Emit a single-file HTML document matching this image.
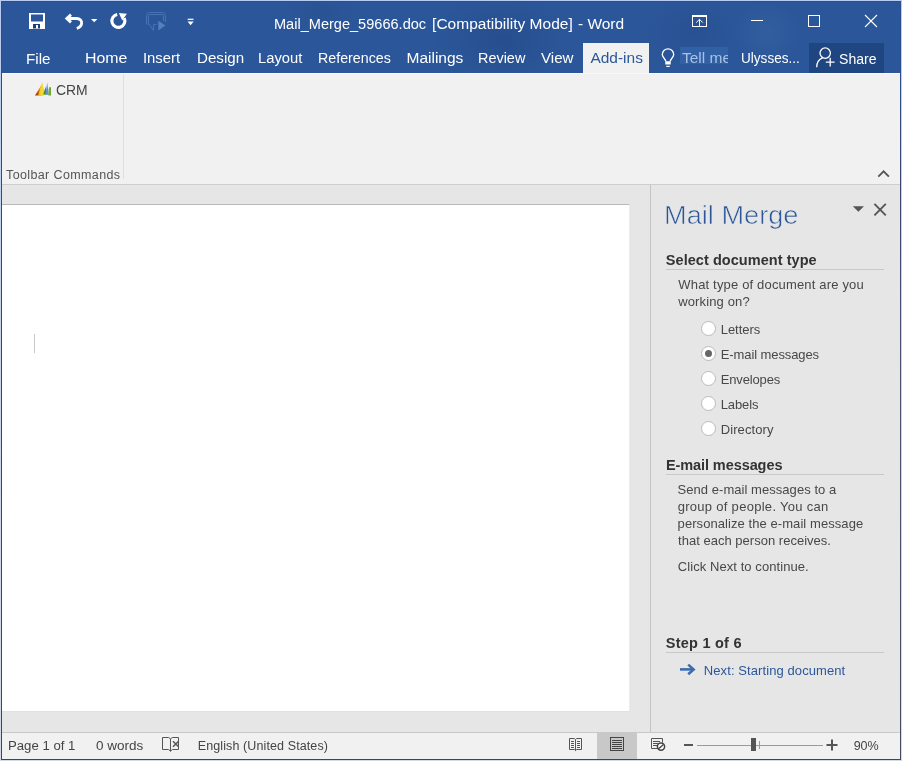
<!DOCTYPE html>
<html lang="en">
<head>
<meta charset="utf-8">
<title>Mail_Merge_59666.doc [Compatibility Mode] - Word</title>
<style>
*{box-sizing:border-box;margin:0;padding:0}
html,body{width:902px;height:761px;overflow:hidden;background:#c3d2ee}
body{font-family:"Liberation Sans",sans-serif;position:relative;color:#444;will-change:transform}
.abs{position:absolute}
svg{position:absolute;left:0;top:0;overflow:visible}
.t{position:absolute;white-space:nowrap}
#frame{left:0;top:0;width:902px;height:761px;background:linear-gradient(#b9cbf0 0,#c2d1ee 200px,#d4d9e6 100%)}
#inner{left:1px;top:1px;width:900px;height:759px;background:linear-gradient(#2a4f8c 0,#2b4d88 70px,#2d4877 400px,#39465f 100%)}
#titlebar{left:2px;top:2px;width:898px;height:71px;overflow:hidden;background:radial-gradient(ellipse 75px 50px at 500px 38px,rgba(0,10,50,.11),transparent),radial-gradient(ellipse 55px 40px at 690px 30px,rgba(0,10,50,.08),transparent),radial-gradient(ellipse 35px 32px at 765px 30px,rgba(255,255,255,.035),transparent),radial-gradient(ellipse 40px 25px at 320px 10px,rgba(0,10,50,.06),transparent),#2b579a}
#ribbon{left:2px;top:73px;width:898px;height:111px;background:#f1f1f1}
#ribline{left:2px;top:184px;width:898px;height:1px;background:#cecece}
#work{left:2px;top:185px;width:898px;height:547px;background:#e6e6e6}
#page{left:2px;top:204px;width:628px;height:508px;background:#fff;border-top:1px solid #b9b9b9;border-bottom:1px solid #e0e0e0;border-right:1px solid #ececec}
#vsep{left:650px;top:185px;width:1px;height:547px;background:#c4c4c4}
#status{left:2px;top:732px;width:898px;height:27px;background:#f1f1f1;border-top:1px solid #c8c8c8}
.tab{font-size:15.5px;line-height:17px;top:49px;color:#fff}
.st{font-size:12.5px;line-height:14px;top:739px;color:#444}
.pt{font-size:13px;line-height:15px;color:#484848}
.ph{font-size:14.5px;line-height:16px;font-weight:bold;color:#333}
.hr{position:absolute;left:666px;width:218px;height:1px;background:#c8c8c8}
.radio{position:absolute;left:701px;width:15px;height:15px;border-radius:50%;border:1px solid #bbb;background:#fff}
.radio.on::after{content:"";position:absolute;left:3px;top:3px;width:7px;height:7px;border-radius:50%;background:#666}
</style>
</head>
<body>
<div id="frame" class="abs"></div>
<div id="inner" class="abs"></div>
<div class="abs" style="left:900px;top:1px;width:1px;height:759px;background:linear-gradient(#2a4f8c 0,#2a4f8c 72px,#3d4472 180px,#4e526f 420px,#454a60 100%)"></div>
<div id="titlebar" class="abs"></div>
<div id="ribbon" class="abs"></div>
<div id="ribline" class="abs"></div>
<div class="abs" style="left:2px;top:73px;width:898px;height:1px;background:#f8f9fb"></div>
<div id="work" class="abs"></div>
<div id="page" class="abs"></div>
<div id="vsep" class="abs"></div>
<div id="status" class="abs"></div>

<!-- title -->
<div class="t" id="title" style="left:273.6px;letter-spacing:0.00px;top:15px;font-size:15.5px;line-height:17px;color:#fff;transform-origin:0 0;transform:scaleX(0.9389)">Mail_Merge_59666.doc</div>
<div class="t" id="title2" style="left:432.1px;letter-spacing:0.01px;top:15px;font-size:15.5px;line-height:17px;color:#fff">[Compatibility Mode]</div>
<div class="t" id="title3" style="left:578.0px;letter-spacing:-0.02px;top:15px;font-size:15.5px;line-height:17px;color:#fff">- Word</div>

<!-- tabs -->
<div class="abs" id="addtab" style="left:583px;top:43px;width:65.7px;height:30px;background:#f1f1f1"></div>
<div class="abs" id="tellbg" style="left:680px;top:47px;width:48px;height:17px;background:#3160a5"></div>
<div class="abs" id="sharebg" style="left:809px;top:43px;width:75px;height:30px;background:#1f4680"></div>
<div class="t tab" id="tFile" style="left:25.6px;letter-spacing:0.00px;top:50px;transform-origin:0 0;transform:scaleX(0.9807)">File</div>
<div class="t tab" id="tHome" style="left:84.5px;letter-spacing:0.00px;transform-origin:0 0;transform:scaleX(1.0243)">Home</div>
<div class="t tab" id="tInsert" style="left:142.6px;letter-spacing:0.00px;transform-origin:0 0;transform:scaleX(0.9563)">Insert</div>
<div class="t tab" id="tDesign" style="left:196.7px;letter-spacing:0.00px;transform-origin:0 0;transform:scaleX(0.9765)">Design</div>
<div class="t tab" id="tLayout" style="left:257.8px;letter-spacing:0.00px;transform-origin:0 0;transform:scaleX(0.9521)">Layout</div>
<div class="t tab" id="tRef" style="left:317.8px;letter-spacing:0.00px;transform-origin:0 0;transform:scaleX(0.9184)">References</div>
<div class="t tab" id="tMail" style="left:406.5px;letter-spacing:-0.01px">Mailings</div>
<div class="t tab" id="tReview" style="left:477.7px;letter-spacing:0.00px;transform-origin:0 0;transform:scaleX(0.9307)">Review</div>
<div class="t tab" id="tView" style="left:541.1px;letter-spacing:0.00px;transform-origin:0 0;transform:scaleX(0.9742)">View</div>
<div class="t tab" id="tAdd" style="left:590.4px;letter-spacing:-0.01px;color:#2b579a">Add-ins</div>
<div class="t tab" id="tTell" style="left:682px;color:#a9c0e6;width:46.3px;overflow:hidden">Tell me</div>
<div class="t tab" id="tUser" style="left:740.7px;letter-spacing:0.00px;transform-origin:0 0;transform:scaleX(0.8754)">Ulysses...</div>
<div class="t tab" id="tShare" style="left:838.6px;letter-spacing:0.00px;top:50px;transform-origin:0 0;transform:scaleX(0.9070)">Share</div>

<!-- ribbon -->
<div class="t" id="crm" style="left:55.6px;letter-spacing:0.00px;top:81px;font-size:15.5px;line-height:17px;color:#444;transform-origin:0 0;transform:scaleX(0.8986)">CRM</div>
<div class="t" id="tbc" style="left:6.0px;letter-spacing:0.38px;top:168px;font-size:12.5px;line-height:14px;color:#555">Toolbar Commands</div>
<div class="abs" style="left:123px;top:74px;width:1px;height:105px;background:#dfdfdf"></div>

<!-- pane -->
<div class="t" id="mm" style="left:663.7px;letter-spacing:0.00px;top:201px;font-size:25px;line-height:28px;color:#2b579a;-webkit-text-stroke:0.6px #e6e6e6;transform-origin:0 0;transform:scaleX(1.0870)">Mail Merge</div>
<div class="t ph" id="h1" style="left:665.8px;letter-spacing:0.05px;top:252px">Select document type</div>
<div class="hr" style="top:269px"></div>
<div class="t pt" id="q1" style="left:678.3px;letter-spacing:0.17px;top:277px">What type of document are you</div>
<div class="t pt" id="q2" style="left:678.2px;letter-spacing:0.14px;top:294px">working on?</div>
<div class="radio" style="top:321px"></div><div class="t pt" id="r1" style="left:720.7px;letter-spacing:-0.03px;top:322px">Letters</div>
<div class="radio on" style="top:346px"></div><div class="t pt" id="r2" style="left:720.7px;letter-spacing:-0.09px;top:347px">E-mail messages</div>
<div class="radio" style="top:371px"></div><div class="t pt" id="r3" style="left:720.7px;letter-spacing:-0.14px;top:372px">Envelopes</div>
<div class="radio" style="top:396px"></div><div class="t pt" id="r4" style="left:720.7px;letter-spacing:-0.11px;top:397px">Labels</div>
<div class="radio" style="top:421px"></div><div class="t pt" id="r5" style="left:720.7px;letter-spacing:0.10px;top:422px">Directory</div>
<div class="t ph" id="h2" style="left:665.9px;letter-spacing:-0.08px;top:457px">E-mail messages</div>
<div class="hr" style="top:474px"></div>
<div class="t pt" id="d1" style="left:677.5px;letter-spacing:0.05px;top:482px">Send e-mail messages to a</div>
<div class="t pt" id="d2" style="left:677.7px;letter-spacing:0.29px;top:499px">group of people. You can</div>
<div class="t pt" id="d3" style="left:677.6px;letter-spacing:0.07px;top:516px">personalize the e-mail message</div>
<div class="t pt" id="d4" style="left:678.0px;letter-spacing:0.02px;top:533px">that each person receives.</div>
<div class="t pt" id="d5" style="left:677.8px;letter-spacing:0.07px;top:559px">Click Next to continue.</div>
<div class="t ph" id="h3" style="left:665.8px;letter-spacing:0.24px;top:635px">Step 1 of 6</div>
<div class="hr" style="top:652px"></div>
<div class="t pt" id="nx" style="left:703.8px;letter-spacing:0.09px;top:663px;color:#2b579a">Next: Starting document</div>

<!-- status -->
<div class="abs" id="plbg" style="left:597px;top:733px;width:40px;height:26px;background:#c8c8c8"></div>
<div class="t st" id="s1" style="left:7.8px;letter-spacing:0.00px;transform-origin:0 0;transform:scaleX(1.0537)">Page 1 of 1</div>
<div class="t st" id="s2" style="left:95.7px;letter-spacing:0.00px;transform-origin:0 0;transform:scaleX(1.0811)">0 words</div>
<div class="t st" id="s3" style="left:197.7px;letter-spacing:0.11px">English (United States)</div>
<div class="t st" id="s4" style="left:853.7px;letter-spacing:-0.06px">90%</div>

<!-- ICONS -->
<svg id="icons" width="902" height="761" viewBox="0 0 902 761">
<!-- save -->
<g>
<rect x="29" y="13" width="16" height="16" fill="#fff"/>
<rect x="31" y="14.5" width="12" height="7" fill="#2b579a"/>
<rect x="33" y="24" width="7" height="4.5" fill="#1d3f78"/>
<rect x="36" y="25" width="2" height="3.5" fill="#fff"/>
</g>
<!-- undo -->
<g fill="none" stroke="#fff" stroke-width="2.8" stroke-linecap="butt" stroke-linejoin="miter">
<path d="M71 14.6 L66.8 18.5 L71 22.4"/>
<path d="M67.2 18.5 H76.3 C80.3 18.5 82 21 81.6 23.5 C81.2 26 79.4 27.6 76.8 28.4"/>
</g>
<path d="M91 19 h6.4 l-3.2 3.2z" fill="#fff"/>
<!-- redo -->
<g>
<path d="M117.2 14.5 A6.5 6.5 0 1 0 124.3 18.2" fill="none" stroke="#fff" stroke-width="3.1"/>
<path d="M118.9 12.9 L126.9 13.7 L122.2 20.6 Z" fill="#fff"/>
</g>
<!-- dim speech/play icon -->
<g fill="none" stroke="#4772b3" stroke-width="1">
<path d="M146.5 24 V15.5 Q146.5 12.5 149.5 12.5 H162.5 Q165.5 12.5 165.5 15.5 V22"/>
<path d="M148.5 23.5 V16 Q148.5 14.5 150 14.5 H162 Q163.5 14.5 163.5 16 V21"/>
<path d="M146.5 24 H149 L153.5 30.5 V24.5 H156.5"/>
</g>
<path d="M158.3 20.8 V30.4 L165.4 25.6 Z" fill="#5580bd"/>
<!-- customize QAT -->
<rect x="187.7" y="18.7" width="5.8" height="1.2" fill="#fff"/>
<path d="M187.5 21.6 h6.2 l-3.1 3.6z" fill="#fff"/>
<!-- ribbon display options -->
<g fill="none" stroke="#fff" stroke-width="1">
<rect x="692.5" y="15.5" width="14" height="11"/>
<path d="M692.5 16.5 H706.5"/>
<path d="M699.5 26 V19.5 M696.2 22.6 L699.5 19.3 L702.8 22.6"/>
</g>
<!-- min / max / close -->
<rect x="751" y="20" width="12" height="1" fill="#fff"/>
<rect x="808.5" y="15.5" width="11" height="11" fill="none" stroke="#fff" stroke-width="1"/>
<path d="M865 15 L877 27 M877 15 L865 27" stroke="#fff" stroke-width="1.1" fill="none"/>
<!-- lightbulb -->
<g fill="none" stroke="#fff" stroke-width="1.3">
<path d="M665.8 61.6 C665.8 58.8 662.3 57.6 662.3 54.6 A5.7 5.7 0 0 1 673.7 54.6 C673.7 57.6 670.2 58.8 670.2 61.6"/>
</g>
<rect x="665.3" y="61.3" width="5.4" height="3.2" fill="#fff"/>
<rect x="666.3" y="65.8" width="3.4" height="1.2" fill="#fff"/>
<!-- share icon -->
<g fill="none" stroke="#fff" stroke-width="1.3">
<circle cx="825.2" cy="53.1" r="5.2"/>
<path d="M816.7 67.3 C816.7 62.5 819.2 59.2 822.6 57.9"/>
<path d="M825.8 62.2 H834.6 M830.2 57.8 V66.6"/>
</g>
<!-- CRM logo -->
<defs>
<linearGradient id="gO" x1="0" y1="1" x2="1" y2="0"><stop offset="0" stop-color="#8a2a00"/><stop offset="0.6" stop-color="#e8761a"/><stop offset="1" stop-color="#f5b21a"/></linearGradient>
<linearGradient id="gY" x1="0" y1="0" x2="1" y2="0"><stop offset="0" stop-color="#f3a81c"/><stop offset="0.5" stop-color="#f1df2c"/><stop offset="1" stop-color="#c9d42c"/></linearGradient>
</defs>
<path d="M35 95.6 L41.2 85.5 L43.5 95.2 Z" fill="url(#gO)"/>
<path d="M38.2 95 L42.1 82 L45.3 95 Z" fill="url(#gY)"/>
<path d="M43.3 94.6 L45.6 86.8 L46.8 94.6 Z" fill="#4f8a22"/>
<path d="M45.3 94.8 L47.2 82.4 L48.8 94.8 Z" fill="#668cd6"/>
<path d="M48.3 95.6 L48.9 87.6 L51 86.9 V95.6 Z" fill="#6eaa33"/>
<!-- collapse ribbon chevron -->
<path d="M878.3 176.6 L883.6 171.3 L888.9 176.6" fill="none" stroke="#555" stroke-width="1.8"/>
<!-- pane controls -->
<path d="M852.8 206.3 H864 L858.4 211.8 Z" fill="#555"/>
<path d="M874.4 203.9 L885.8 215.3 M885.8 203.9 L874.4 215.3" stroke="#555" stroke-width="1.9" fill="none"/>
<!-- text cursor -->
<rect x="34" y="334" width="1" height="19" fill="#c9c9c9"/>
<!-- next arrow -->
<g fill="none" stroke="#3c6cb0" stroke-width="2.6">
<path d="M680 669.4 H693"/>
<path d="M688.2 664.6 L693.6 669.4 L688.2 674.2" stroke-linejoin="miter"/>
</g>
<!-- status: proofing icon -->
<g fill="none" stroke="#555" stroke-width="1">
<path d="M162.5 737.5 H168.6 L170.5 738.8 L172.4 737.5 H178.5 V749.5 H172.4 L170.5 751.3 L168.6 749.5 H162.5 Z"/>
<path d="M170.5 738.8 V751"/>
</g>
<path d="M173 741.2 L178.6 746.8 M178.6 741.2 L173 746.8" stroke="#555" stroke-width="1.5" fill="none"/>
<!-- read mode icon -->
<g fill="none" stroke="#555" stroke-width="1">
<path d="M569.5 738.5 H574.3 L575.5 739.6 L576.7 738.5 H581.5 V749.5 H576.7 L575.5 750.6 L574.3 749.5 H569.5 Z"/>
<path d="M575.5 739.6 V750.4"/>
<path d="M571 741.5 H574 M571 743.5 H574 M571 745.5 H574 M571 747.5 H574 M577 741.5 H580 M577 743.5 H580 M577 745.5 H580 M577 747.5 H580"/>
</g>
<!-- print layout icon -->
<g fill="none" stroke="#444" stroke-width="1">
<rect x="610.5" y="737.5" width="13" height="13"/>
<path d="M612 740.5 H622 M612 742.5 H622 M612 744.5 H622 M612 746.5 H622 M612 748.5 H622"/>
</g>
<!-- web layout icon -->
<g fill="none" stroke="#555" stroke-width="1">
<path d="M658 748.5 H651.5 V738.5 H662.5 V742.5"/>
<path d="M653 741.5 H660 M653 743.5 H658 M653 745.5 H657"/>
</g>
<circle cx="661" cy="746.6" r="3.6" fill="#fff" stroke="#444" stroke-width="1.5"/>
<path d="M658.6 748.8 L663.4 744.4" stroke="#444" stroke-width="1.4"/>
<!-- zoom slider -->
<rect x="684" y="744" width="9" height="2" fill="#555"/>
<rect x="697" y="745" width="126" height="1" fill="#9a9a9a"/>
<rect x="759" y="741" width="1" height="8" fill="#9a9a9a"/>
<rect x="751" y="738" width="5" height="13" fill="#555"/>
<rect x="826.5" y="744" width="11" height="2" fill="#555"/>
<rect x="831" y="739.5" width="2" height="11" fill="#555"/>
</svg>
</body>
</html>
